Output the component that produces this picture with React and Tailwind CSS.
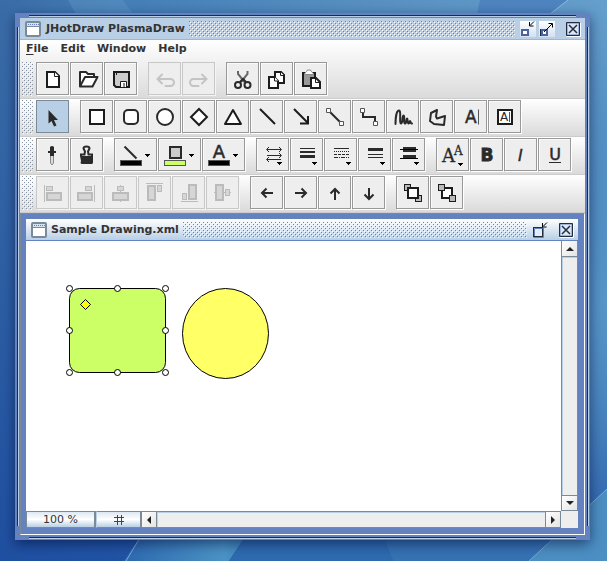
import React, { useId } from "react";

const INK = "#2a2a2a";

function Bumps({ className, dot, light = "#ffffff" }) {
  const id = useId();
  return (
    <svg className={className} width="100%" height="100%" shapeRendering="crispEdges" aria-hidden="true">
      <defs>
        <pattern id={id} width="4" height="4" patternUnits="userSpaceOnUse">
          <path d="M0 0h1v1h-1zM2 2h1v1h-1z" fill={dot} />
          <path d="M1 1h1v1h-1zM3 3h1v1h-1z" fill={light} />
        </pattern>
      </defs>
      <rect width="100%" height="100%" fill={`url(#${id})`} />
    </svg>
  );
}

const Caret = ({ x, y }) => <path d={`M${x} ${y}h5v1h-1v1h-1v1h-1v-1h-1v-1h-1z`} fill="#000" stroke="none" shapeRendering="crispEdges" />;

const Swatch = ({ color }) => (
  <rect x="6.5" y="22.5" width="21" height="5" fill={color} stroke="#555" />
);

const S = ({ children, w = 2, fill = "none", color = INK, ...rest }) => (
  <g fill={fill} stroke={color} strokeWidth={w} {...rest}>{children}</g>
);

const LETTER = "font-['DejaVu_Sans','Noto_Sans',sans-serif]";

const icons = {
  New: <S fill="#fff" color="#1c1c1c"><path d="M11 10h8l4 4v11h-12z" /><path d="M18.500 10v4.500h4.500" strokeWidth="1" /></S>,
  Open: <S strokeLinejoin="round"><path fill="#fff" d="M10 24v-14h6l2 2h6v3" /><path fill="#fff" d="M10 24.500h12.500l5-9.500h-12.500z" /></S>,
  Save: <S color="#1c1c1c"><path fill="#ccc" d="M10 10h15v15h-13l-2-2z" /><path strokeWidth="1" d="M12.500 11v2" /><path fill="#fff" strokeWidth="1" d="M16.500 25v-5.500h6v5.500" /><path d="M20 21v4" strokeWidth="1" /></S>,
  Undo: <S color="#c4c4c4" strokeLinecap="round"><path d="M10 17h12.500a3.500 3.500 0 0 1 0 7h-5M14 12.500l-4.500 4.500 4.500 4.500" /></S>,
  Redo: <S color="#c4c4c4" strokeLinecap="round"><path d="M24 17h-12.500a3.500 3.500 0 0 0 0 7h5M20 12.500l4.500 4.500-4.500 4.500" /></S>,
  Cut: <S><path strokeWidth="2" d="M12 9v3l6.500 8M21.500 9v3l-6.500 8" stroke="#666" /><path d="M14 20l3-3 3 3" /><ellipse cx="12" cy="23" rx="3" ry="3" /><ellipse cx="21.500" cy="23" rx="3" ry="3" /></S>,
  Copy: <S fill="#fff" color="#1c1c1c"><path d="M15 10h6l3 3v8h-9z" /><path d="M20.500 10v3.500h3.500" strokeWidth="1" /><path d="M9 15h5l4 4v7h-9z" /><path d="M14.500 15v4h4" strokeWidth="1" /></S>,
  Paste: <S color="#1c1c1c"><path fill="#999" d="M9 11h12v13h-12z" /><path fill="#fff" stroke="#888" strokeWidth="1" d="M10.500 12.500c0-2 2-2 3-4.500h3c1 2.500 3 2.500 3 4.500z" /><path fill="#fff" d="M17 16h5l4 4v6h-9z" /><path strokeWidth="1" d="M21.500 16v4.500h4.500" /></S>,
  Select: <path d="M12.500 10v13.500l3-2.500 2.500 5.500 2.500-1-2.500-5.500h4z" fill={INK} />,
  Rectangle: <S fill="#fff" color="#1c1c1c"><rect x="10" y="10" width="14" height="14" /></S>,
  "Round Rectangle": <S fill="#fff"><rect x="10" y="10" width="14" height="14" rx="4" /></S>,
  Ellipse: <S fill="#fff"><circle cx="17" cy="17" r="8" /></S>,
  Diamond: <S fill="#fff" color="#1c1c1c"><path d="M17 9l8 8-8 8-8-8z" /></S>,
  Triangle: <S fill="#fff" color="#1c1c1c" strokeLinejoin="round"><path d="M17 10l8 14h-16z" /></S>,
  Line: <S color="#1c1c1c"><path d="M10 9l15 15" /></S>,
  Arrow: <S color="#1c1c1c"><path d="M10 9l14 14M24 16v7.500h-8" /></S>,
  "Line Connection": <S><path d="M12 12l10 10" /><path strokeWidth="1" fill="#fff" stroke="#555" d="M8.500 8.500h4v4h-4zM21.500 21.500h4v4h-4z" /></S>,
  "Elbow Connection": <S><path d="M11 12v5h12v5" /><path strokeWidth="1" fill="#fff" stroke="#555" d="M8.500 8.500h4v4h-4zM21.500 21.500h4v4h-4z" /></S>,
  Scribble: <S strokeLinejoin="round" strokeLinecap="round"><path d="M9.500 24c0-6 1-13.500 3.500-13.500s0 13 2 13 1-8 2.500-8-.2 8 1.500 8 1-5 2-5 .2 5 1.500 5 .8-2.500 1.500-2.500.5 3 2 2.500" /></S>,
  Polygon: <S strokeLinejoin="round"><path d="M17 10l-6 3-1 8 4 3 10 1 1-9-8 2.500-1-2z" /></S>,
  Text: <g><text x="11" y="23" fontSize="17" fill={INK} stroke={INK} strokeWidth=".5" className={LETTER}>A</text><path d="M24.500 9.500v15" stroke="#555" /></g>,
  "Text Area": <g><rect x="10" y="10" width="14" height="14" fill="#fff" stroke="#1c1c1c" strokeWidth="2" /><text x="12" y="21" fontSize="12" fill={INK} className={LETTER}>A</text><path d="M21.500 12v10" stroke="#555" /></g>,
  "Pick Attributes": <g><path d="M14.500 16h3v9l-1.500 2-1.500-2z" fill="#ddd" stroke="#888" /><path d="M12 13h8v2h-2v3h-4v-3h-2zM14 9q2-2 4 0v4h-4z" fill={INK} /></g>,
  "Apply Attributes": <g><path d="M11 18v-1.500h3.500l.5-3-1.500-3q0-2 3-2t3 2l-1.500 3 .5 3h3.500v1.500" fill="none" stroke={INK} strokeWidth="2" /><path d="M10 18h13v7l-1 1h-10.500l-1-1 .5-2z" fill={INK} /></g>,
  "Stroke Color": <g><path d="M10.500 8.500l12 12" stroke={INK} strokeWidth="2" /><Swatch color="#000" /><Caret x={31} y={16} /></g>,
  "Fill Color": <g><rect x="12" y="9" width="11" height="11" fill="#ccc" stroke={INK} strokeWidth="2" /><Swatch color="#ccff66" /><Caret x={31} y={16} /></g>,
  "Text Color": <g><text x="17" y="20" textAnchor="middle" fontSize="18" fill={INK} stroke={INK} strokeWidth=".5" className={LETTER}>A</text><Swatch color="#000" /><Caret x={31} y={16} /></g>,
  "Line Ends": <g><path d="M11 11.500h14M11 17.500h14M11 21.500h14M13 9l-2.500 2.500 2.500 2.500M23 9l2.500 2.500-2.500 2.500M23 15l2.500 2.500-2.500 2.500M13 19l-2.500 2.500 2.500 2.500" fill="none" stroke={INK} /><Caret x={21} y={24} /></g>,
  "Line Width": <g><path d="M10 10h15v1h-15zM10 13h15v2h-15zM10 17h15v3h-15z" fill={INK} /><Caret x={22} y={24} /></g>,
  "Line Dashes": <g stroke={INK}><path d="M10 10.500h15" /><path d="M10 13.500h15" strokeDasharray="1 1" /><path d="M10 16.500h15" strokeDasharray="3 1" /><path d="M10 19.500h15" strokeDasharray="4 1 1 1" /><Caret x={22} y={24} /></g>,
  "Line Style": <g><path d="M10 10h15v3h-15zM10 16h15v1h-15zM10 19h15v1h-15z" fill={INK} /><Caret x={22} y={24} /></g>,
  "Line Placement": <g><path d="M11 9h13v5h-13zM11 17h13v4h-13z" fill={INK} /><path d="M8 11.500h18M8 20.500h18" stroke="#000" /><Caret x={22} y={24} /></g>,
  Font: <g fill={INK} stroke={INK} strokeWidth=".3" className="font-['DejaVu_Serif','Liberation_Serif',serif]"><text x="6" y="24" fontSize="18">A</text><text x="18" y="17" fontSize="12">A</text><Caret x={22} y={25} /></g>,
  Bold: <text x="17" y="23" textAnchor="middle" fontSize="17" fontWeight="700" fill={INK} stroke={INK} strokeWidth=".8" className={LETTER}>B</text>,
  Italic: <text x="16" y="23" textAnchor="middle" fontSize="17" fontStyle="italic" fill={INK} stroke={INK} strokeWidth=".4" className="font-['Liberation_Sans',sans-serif]">I</text>,
  Underline: <g><text x="17" y="22" textAnchor="middle" fontSize="16" fill={INK} stroke={INK} strokeWidth=".5" className={LETTER}>U</text><path d="M11 24.500h12" stroke={INK} /></g>,
  "Align Left": <S w={1} color="#bbb" fill="#d6d6d6"><path d="M8.500 9v17" /><rect x="10.500" y="10.500" width="6" height="4" /><rect x="11" y="17" width="14" height="7" strokeWidth="2" /></S>,
  "Align Right": <S w={1} color="#bbb" fill="#d6d6d6"><path d="M24.500 9v17" /><rect x="15.500" y="10.500" width="6" height="4" /><rect x="8" y="17" width="14" height="7" strokeWidth="2" /></S>,
  "Align Center": <S w={1} color="#bbb" fill="#d6d6d6"><path d="M16.500 9v17" /><rect x="13.500" y="10.500" width="6" height="4" /><rect x="9" y="17" width="15" height="7" strokeWidth="2" /></S>,
  "Align Top": <S w={1} color="#bbb" fill="#d6d6d6"><path d="M8 7.500h17" /><rect x="10" y="10" width="7" height="14" strokeWidth="2" /><rect x="19.500" y="9.500" width="4" height="6" /></S>,
  "Align Bottom": <S w={1} color="#bbb" fill="#d6d6d6"><path d="M9 25.500h17" /><rect x="17" y="9" width="7" height="14" strokeWidth="2" /><rect x="10.500" y="17.500" width="4" height="6" /></S>,
  "Align Middle": <S w={1} color="#bbb" fill="#d6d6d6"><path d="M8 16.500h17" /><rect x="10" y="9" width="7" height="15" strokeWidth="2" /><rect x="19.500" y="13.500" width="4" height="6" /></S>,
  "Move Left": <S><path d="M23 17h-11M16.500 12.500l-4.500 4.500 4.500 4.500" /></S>,
  "Move Right": <S><path d="M11 17h11M17.500 12.500l4.500 4.500-4.500 4.500" /></S>,
  "Move Up": <S><path d="M17 24v-11M12.500 17.500l4.500-4.500 4.500 4.500" /></S>,
  "Move Down": <S><path d="M17 12v11M12.500 18.500l4.500 4.500 4.500-4.500" /></S>,
  "Bring to Front": <S color="#1c1c1c" w={1} fill="#bbb"><rect x="8.500" y="8.500" width="6" height="6" /><rect x="19.500" y="19.500" width="6" height="6" /><rect x="12" y="12" width="10" height="10" strokeWidth="2" fill="#fff" /></S>,
  "Send to Back": <S color="#1c1c1c" w={1} fill="#bbb"><rect x="12" y="12" width="10" height="10" strokeWidth="2" fill="#fff" /><rect x="8.500" y="8.500" width="6" height="6" /><rect x="19.500" y="19.500" width="6" height="6" /></S>,
};

function ToolButton({ name, wide, disabled, active }) {
  const look = active
    ? "border-[#7a8a99] bg-[#b8cfe5]"
    : disabled
      ? "border-[#c8c8c8] bg-[#eee] shadow-[1px_1px_0_#f4f4f4]"
      : "border-[#999] bg-[#eee] shadow-[1px_1px_0_#fff,inset_1px_1px_0_#fafafa]";
  return (
    <button type="button" aria-label={name} aria-pressed={active} disabled={disabled}
      className={`h-[33px] shrink-0 border ${wide ? "w-[43px]" : "w-[33px]"} ${look}`}>
      <svg className="block" width={wide ? 41 : 31} height="31" viewBox={wide ? "1 1 41 31" : "1 1 31 31"} aria-hidden="true">
        {icons[name]}
      </svg>
    </button>
  );
}

const toolbars = [
  { label: "Standard", groups: [["New", "Open", "Save"], ["Undo", "Redo"], ["Cut", "Copy", "Paste"]] },
  { label: "Drawing tools", groups: [["Select"], ["Rectangle", "Round Rectangle", "Ellipse", "Diamond", "Triangle", "Line", "Arrow", "Line Connection", "Elbow Connection", "Scribble", "Polygon", "Text", "Text Area"]] },
  { label: "Attributes", groups: [["Pick Attributes", "Apply Attributes"], ["Stroke Color", "Fill Color", "Text Color"], ["Line Ends", "Line Width", "Line Dashes", "Line Style", "Line Placement"], ["Font", "Bold", "Italic", "Underline"]] },
  { label: "Arrange", groups: [["Align Left", "Align Right", "Align Center", "Align Top", "Align Bottom", "Align Middle"], ["Move Left", "Move Right", "Move Up", "Move Down"], ["Bring to Front", "Send to Back"]] },
];

function Toolbar({ label, groups, gradient }) {
  return (
    <div role="toolbar" aria-label={label}
      className={`flex h-[38px] shrink-0 gap-[3px] overflow-hidden border-b border-[#ccc] pl-0.5 pt-px ${gradient ? "bg-linear-to-b from-white to-[#dadada]" : ""}`}>
      <div className="h-[34px] w-[11px] shrink-0"><Bumps className="block" dot="#8493a3" /></div>
      <div className="flex gap-[11px]">
        {groups.map((group) => (
          <div key={group[0]} className="flex gap-px">
            {group.map((name) => (
              <ToolButton key={name} name={name} wide={name.endsWith("Color")} active={name === "Select"}
                disabled={name === "Undo" || name === "Redo" || name.startsWith("Align")} />
            ))}
          </div>
        ))}
      </div>
    </div>
  );
}

const FrameIcon = () => (
  <svg width="16" height="16" className="shrink-0" aria-hidden="true">
    <rect x="1" y="1" width="14" height="14" rx="1" fill="#fff" stroke="#7a8a99" strokeWidth="2" />
    <path d="M2 2h12v3h-12z" fill="#d5e2f0" />
    <path d="M3 3.500h11" stroke="#6382bf" strokeDasharray="1 1" />
    <path d="M2 5.500h12" stroke="#7a8a99" />
  </svg>
);

const frameGlyphs = {
  Minimize: (
    <>
      <path d="M1.500 8.500h7M1.500 8v7" stroke="#222c44" />
      <rect x="2" y="9" width="6" height="5" fill="#fff" stroke="#4a62a0" strokeWidth="2" />
      <path d="M14 .5l-4 4M9.500 1v4h4" fill="none" stroke="#000" />
    </>
  ),
  Maximize: (
    <>
      <path d="M1.500 8.500h7M1.500 8v7" stroke="#222c44" />
      <rect x="3" y="9" width="5" height="5" fill="#fff" stroke="#4a62a0" strokeWidth="2" />
      <path d="M5 11l8-8M9.500 2.500h4v4" fill="none" stroke="#000" />
    </>
  ),
  Iconify: (
    <>
      <rect x="1.500" y="5.500" width="9" height="9" fill="#e3edf7" stroke="#222c44" />
      <path d="M2.500 14v-7.500h8M11.500 6v9.500h-10" fill="none" stroke="#6382bf" />
      <path d="M15 .5l-4 4M10.500 1v4h4" fill="none" stroke="#000" />
    </>
  ),
  Close: (
    <>
      <rect x="2" y="2" width="12" height="12" fill="#dbe7f3" stroke="#6382bf" strokeWidth="1" />
      <path d="M1.500 14.500v-13h13v13z" fill="none" stroke="#222c44" />
      <path d="M15.500 2v13.500h-14" fill="none" stroke="#fff" />
      <path d="M4 4l8 8M12 4l-8 8" stroke="#222c44" strokeWidth="1.500" />
    </>
  ),
};

function FrameButton({ name, lit }) {
  return (
    <button type="button" aria-label={name} className={`size-4 shrink-0 ${lit ? "bg-linear-to-b from-white to-[#d3e1ef]" : ""}`}>
      <svg className="block" width="16" height="16" aria-hidden="true">{frameGlyphs[name]}</svg>
    </button>
  );
}

function ScrollButton({ name, d, className }) {
  return (
    <button type="button" aria-label={name}
      className={`flex shrink-0 items-center justify-center border-[#7a8a99] bg-linear-to-br from-white to-[#e4e4e4] ${className}`}>
      <svg width="10" height="10" aria-hidden="true"><path d={d} fill="#222" /></svg>
    </button>
  );
}

const handles = [[69, 288], [117, 288], [165, 288], [69, 330], [165, 330], [69, 372], [117, 372], [165, 372]];

function Drawing() {
  return (
    <svg className="block min-w-0 flex-1 bg-white" role="img" aria-label="Rounded rectangle and ellipse">
      <g transform="translate(-25.500 -240.500)" stroke="#000">
        <rect x="69" y="288" width="96" height="84" rx="10" fill="#ccff66" />
        <ellipse cx="225" cy="333" rx="43" ry="45" fill="#ffff66" />
        <path d="M85 299l5 5-5 5-5-5z" fill="#ff0" />
        {handles.map(([x, y]) => <circle key={`${x}-${y}`} cx={x} cy={y} r="3" fill="#fff" />)}
      </g>
    </svg>
  );
}

function Desktop() {
  return (
    <svg className="absolute inset-0 size-full" viewBox="0 0 607 561" preserveAspectRatio="none" aria-hidden="true">
      <defs>
        <linearGradient id="sky" x1="0" y1="0" x2="1" y2="0">
          <stop offset="0" stopColor="#3a6ca7" /><stop offset=".2" stopColor="#447fb7" /><stop offset=".6" stopColor="#5890c2" /><stop offset="1" stopColor="#65a0cd" />
        </linearGradient>
        <linearGradient id="depth" x1="0" y1="0" x2="0" y2="1">
          <stop offset="0" stopColor="#1d4f9f" stopOpacity="0" /><stop offset="1" stopColor="#1848a0" stopOpacity=".8" />
        </linearGradient>
        <radialGradient id="glow" gradientUnits="userSpaceOnUse" cx="607" cy="300" r="260">
          <stop offset="0" stopColor="#5796c9" /><stop offset="1" stopColor="#4f92c6" stopOpacity="0" />
        </radialGradient>
        <linearGradient id="beam" x1="0" y1="0" x2="1" y2="0">
          <stop offset="0" stopColor="#2d69b0" /><stop offset=".8" stopColor="#4b94c6" /><stop offset="1" stopColor="#3f84bd" />
        </linearGradient>
      </defs>
      <rect width="607" height="561" fill="url(#sky)" />
      <rect width="607" height="561" fill="url(#depth)" />
      <rect width="607" height="561" fill="url(#glow)" />
      <path d="M68 0h55l10 14h-57z" fill="#5b93c4" opacity=".5" />
      <path d="M480 0h88l-18 14h-73z" fill="#4a80be" opacity=".8" />
      <path d="M568 0l-18 14" stroke="#8fbbdd" />
      <path d="M124 561l20-30h105l-20 30z" fill="url(#beam)" />
      <path d="M229 561l20-30h132l12 30z" fill="#2e6bb0" />
      <path d="M393 561l-12-30h180l-32 30z" fill="#3672b4" />
      <path d="M529 561l78-72v72z" fill="#4c8fc3" />
      <path d="M529 561l78-72M126 561l18-30" stroke="#78add6" strokeWidth="1" />
    </svg>
  );
}

const menus = ["File", "Edit", "Window", "Help"];

export default function App() {
  return (
    <div className="relative flex h-screen flex-col pb-[21px] pl-[15px] pr-[17px] pt-[13px] font-['DejaVu_Sans','Noto_Sans',sans-serif] text-[11px] text-[#333]">
      <Desktop />
      <div className="relative flex min-h-0 flex-1 flex-col bg-[#6382bf] p-[5px] shadow-[0_4px_12px_rgba(0,10,50,0.55)]">
        <div className="absolute inset-x-3.5 top-0.5 h-0.5 border-t border-[#1f2a44] bg-[#b8cfe5]" />
        <div className="absolute inset-x-3.5 bottom-px h-0.5 border-t border-[#1f2a44] bg-[#b8cfe5]" />
        <div className="absolute inset-y-3.5 left-0.5 w-0.5 border-l border-[#1f2a44] bg-[#b8cfe5]" />
        <div className="absolute inset-y-3.5 right-px w-0.5 border-l border-[#1f2a44] bg-[#b8cfe5]" />

        <header className="relative flex h-[22px] shrink-0 items-center border-b border-[#a0b6cc] bg-[#b8cfe5] pl-[5px] pr-1">
          <FrameIcon />
          <h1 className="ml-[5px] whitespace-nowrap font-bold leading-4">JHotDraw PlasmaDraw</h1>
          <div className="ml-1 mr-[5px] h-4 min-w-0 flex-1"><Bumps className="block" dot="#6382bf" /></div>
          <FrameButton name="Minimize" lit />
          <div className="ml-[3px] mr-2.5 flex"><FrameButton name="Maximize" lit /></div>
          <FrameButton name="Close" />
        </header>

        <div className="shrink-0 bg-linear-to-b from-white to-[#dadada]">
          <nav className="flex h-[21px] items-start gap-3 pl-1.5 pt-px">
            {menus.map((m) => (
              <button key={m} type="button" className="font-bold leading-4">
                {m === "File" ? <><span className="underline underline-offset-2">F</span>ile</> : m}
              </button>
            ))}
          </nav>
          <Toolbar {...toolbars[0]} />
        </div>
        {toolbars.slice(1).map((t) => <Toolbar key={t.label} {...t} gradient />)}

        <main className="flex min-h-0 flex-1 flex-col border border-b-white border-l-[#7a8a99] border-r-white border-t-[#7a8a99] bg-[#6382bf] pb-1.5 pl-[5px] pr-1.5 pt-[5px]">
          <header className="flex h-[22px] shrink-0 items-center border-b border-[#6382bf] bg-linear-to-b from-white to-[#b8cfe5] pl-[5px] pr-1">
            <FrameIcon />
            <h2 className="ml-1 whitespace-nowrap font-bold leading-4">Sample Drawing.xml</h2>
            <div className="ml-1 mr-[5px] h-4 min-w-0 flex-1"><Bumps className="block" dot="#6382bf" /></div>
            <div className="mr-2.5 flex"><FrameButton name="Iconify" /></div>
            <FrameButton name="Close" />
          </header>

          <div className="flex min-h-0 flex-1">
            <Drawing />
            <div className="flex w-[17px] flex-col border-x border-[#7a8a99] bg-[#eee]">
              <ScrollButton name="Scroll up" className="h-4 border-b" d="M1 7h8l-4-4z" />
              <div className="flex-1 border-l border-t border-[#b8cfe5]" />
              <ScrollButton name="Scroll down" className="h-4 border-y" d="M1 3h8l-4 4z" />
            </div>
          </div>
          <div className="flex h-[17px] shrink-0 bg-[#eee] leading-[14px]">
            <button type="button" className="w-[70px] border border-r-2 border-[#7a8a99] bg-linear-to-b from-[#dde8f3] via-white to-[#b8cfe5]">100 %</button>
            <button type="button" aria-label="Toggle grid" className="flex w-[46px] items-center justify-center border border-r-2 border-[#7a8a99] border-l-[#b8cfe5] bg-linear-to-b from-[#dde8f3] via-white to-[#b8cfe5]">
              <svg width="10" height="10" aria-hidden="true"><path d="M3.500 0v10M7.500 0v10M0 2.500h10M0 6.500h10" stroke="#444" /></svg>
            </button>
            <div className="flex flex-1 border-y border-[#7a8a99]">
              <ScrollButton name="Scroll left" className="w-[15px] border-r" d="M7 1v8l-4-4z" />
              <div className="flex-1 border-l border-t border-[#b8cfe5]" />
              <ScrollButton name="Scroll right" className="w-4 border-x" d="M3 1v8l4-4z" />
            </div>
            <div className="w-[17px]" />
          </div>
        </main>
      </div>
    </div>
  );
}
